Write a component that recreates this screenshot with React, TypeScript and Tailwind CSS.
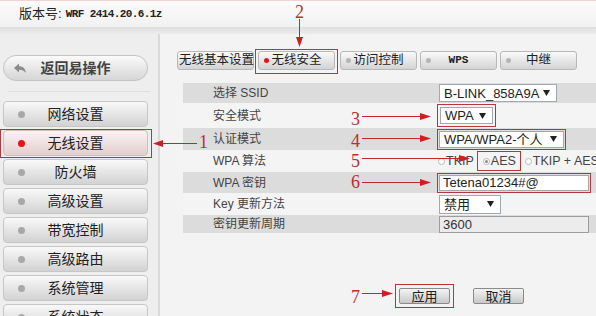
import React from 'react';

const menuItems = ['网络设置', '无线设置', '防火墙', '高级设置', '带宽控制', '高级路由', '系统管理', '系统状态'];
const tabs = ['无线基本设置', '无线安全', '访问控制', 'WPS', '中继'];

function Caret() {
  return (
    <svg width="7" height="6" viewBox="0 0 7 6" className="shrink-0">
      <path d="M0 0 H7 L3.5 6 Z" fill="#222" />
    </svg>
  );
}

function Select({ value, width, height = 'h-[17px]' }: { value: string; width: string; height?: string }) {
  return (
    <div className={`${width} ${height} flex items-center justify-between border border-[#a3a9b0] bg-white pl-[4px] pr-[6px] text-[13px] text-[#222]`}>
      <span className="leading-none">{value}</span>
      <Caret />
    </div>
  );
}

function Radio({ checked, label }: { checked?: boolean; label: string }) {
  return (
    <div className="flex items-center gap-[1px] text-[12.5px] text-[#444]">
      <span className="w-[7px] h-[7px] rounded-full border border-[#b8b8b8] bg-white flex items-center justify-center">
        {checked && <span className="w-[3px] h-[3px] rounded-full bg-[#8a8a8a]" />}
      </span>
      <span className="leading-none whitespace-nowrap">{label}</span>
    </div>
  );
}

function Sidebar() {
  return (
    <div className="w-[158px] shrink-0 bg-[#eeeeee] pt-[21px]">
      <div className="ml-[3px] w-[145px] h-[26px] rounded-full border border-[#c3c3c3] bg-linear-to-b from-[#fbfbfb] to-[#d5d5d5] flex items-center">
        <svg width="12" height="10" viewBox="0 0 12 10" className="ml-[10px]">
          <path d="M5 0.5 L0 5 L5 9.5 V6.8 C8 6.8 10 7.8 12 10 C11.5 6 9 3.3 5 3.3 Z" fill="#8c8c8c" />
        </svg>
        <span className="flex-1 text-center text-[14px] font-bold text-[#444] pr-[22px]">返回易操作</span>
      </div>
      <div className="mt-[10px] mx-[8px] h-px bg-[#dedede]" />
      <div className="mt-[8px] flex flex-col">
        {menuItems.map((item) => {
          const active = item === '无线设置';
          return (
            <div
              key={item}
              className={
                active
                  ? 'w-[152px] h-[29px] border border-[#b3373c] pl-[2px] pt-0'
                  : 'w-[152px] h-[29px] pl-[3px] pt-[1px]'
              }
            >
              <div
                className={
                  active
                    ? 'w-[145px] h-[26px] rounded-[4px] border border-[#d2bcbc] bg-linear-to-b from-[#fbf2f2] to-[#e2cfcf] flex items-center'
                    : 'w-[145px] h-[26px] rounded-[4px] border border-[#c6c6c6] bg-linear-to-b from-[#f9f9f9] to-[#d2d2d2] flex items-center'
                }
              >
                <span className={active ? 'ml-[14px] w-[7px] h-[7px] rounded-full bg-[#e3131b]' : 'ml-[14px] w-[7px] h-[7px] rounded-full bg-[#a8a8a8]'} />
                <span className="flex-1 text-center text-[14px] text-[#222]">{item}</span>
                <span className="w-[21px]" />
              </div>
            </div>
          );
        })}
      </div>
    </div>
  );
}

function Tab({ label, active, first }: { label: string; active?: boolean; first?: boolean }) {
  return (
    <div className="w-[77px] h-[19px] rounded-[3px] border border-[#b8b8b8] bg-linear-to-b from-[#fafafa] to-[#d3d3d3] flex items-center overflow-visible">
      {first ? (
        <span className="ml-[1px] text-[12.5px] text-[#222] whitespace-nowrap leading-none">{label}</span>
      ) : (
        <>
          <span className={active ? 'ml-[5px] w-[5px] h-[5px] rounded-full bg-[#e3131b]' : 'ml-[5px] w-[5px] h-[5px] rounded-full bg-[#b5b5b5]'} />
          <span
            className={
              label === 'WPS'
                ? "flex-1 text-center text-[11px] font-bold text-[#222] font-['Liberation_Mono',monospace]"
                : 'flex-1 text-center text-[12.5px] text-[#222] leading-none'
            }
          >
            {label}
          </span>
          <span className="w-[10px]" />
        </>
      )}
    </div>
  );
}

function Row({ label, gray, h, children }: { label: string; gray?: boolean; h: string; children?: React.ReactNode }) {
  return (
    <div className={`${h} flex items-center ${gray ? 'bg-[#dcdcdc]' : 'bg-[#f4f4f4]'}`}>
      <div className="w-[255px] shrink-0 pl-[30px] text-[12px] text-[#444]">{label}</div>
      <div className="flex-1 min-w-0 flex items-center">{children}</div>
    </div>
  );
}

function Content() {
  return (
    <div className="flex-1 bg-[#f3f3f3] pt-[15px]">
      <div className="ml-[17px] flex items-start">
        <div className="mt-[2px]">
          <Tab label={tabs[0]} first />
        </div>
        <div className="ml-px border border-[#b3373c] px-[2px] pt-px pb-[3px]">
          <Tab label={tabs[1]} active />
        </div>
        <div className="mt-[2px] ml-[2px] flex gap-[3px]">
          {tabs.slice(2).map((t) => (
            <Tab key={t} label={t} />
          ))}
        </div>
      </div>

      <div className="ml-[23px] mt-[9px] w-[413px]">
        <Row label="选择 SSID" gray h="h-[20px]">
          <div className="ml-px">
            <Select value="B-LINK_858A9A" width="w-[118px]" height="h-[18px]" />
          </div>
        </Row>
        <Row label="安全模式" h="h-[25px]">
          <div className="-ml-px border border-[#b3373c] p-[2px]">
            <Select value="WPA" width="w-[53px]" />
          </div>
        </Row>
        <Row label="认证模式" gray h="h-[22px]">
          <div className="-ml-px border border-[#b3373c] p-px">
            <Select value="WPA/WPA2-个人" width="w-[125px]" />
          </div>
        </Row>
        <Row label="WPA 算法" h="h-[22px]">
          <div className="flex items-center shrink-0">
            <Radio label="TKIP" />
            <div className="ml-[3px] h-[20px] border border-[#b3373c] pl-[5px] pr-[4px] flex items-center">
              <Radio checked label="AES" />
            </div>
            <div className="ml-[4px]">
              <Radio label="TKIP + AES" />
            </div>
          </div>
        </Row>
        <Row label="WPA 密钥" gray h="h-[21px]">
          <div className="-ml-px border border-[#b3373c] p-px">
            <div className="w-[150px] h-[16px] border border-[#a6a6a6] bg-white pl-[3px] text-[13px] leading-[14px] text-[#222]">
              Tetena01234#@
            </div>
          </div>
        </Row>
        <Row label="Key 更新方法" h="h-[22px]">
          <div className="ml-px">
            <Select value="禁用" width="w-[62px]" height="h-[19px]" />
          </div>
        </Row>
        <Row label="密钥更新周期" gray h="h-[18px]">
          <div className="ml-px self-end w-[150px] h-[17px] border border-[#9c9c9c] bg-[#ececec] pl-[3px] text-[13px] leading-[15px] text-[#333]">
            3600
          </div>
        </Row>
      </div>

      <div className="mt-[51px] ml-[235px] flex items-center">
        <div className="border border-[#b3373c] p-[3px]">
          <div className="w-[51px] h-[16px] rounded-[2px] border border-[#8a8a8a] bg-linear-to-b from-[#f4f4f4] to-[#c9c9c9] flex items-center justify-center text-[13px] text-[#222] leading-none">
            应用
          </div>
        </div>
        <div className="ml-[19px] w-[51px] h-[16px] rounded-[2px] border border-[#8a8a8a] bg-linear-to-b from-[#f4f4f4] to-[#c9c9c9] flex items-center justify-center text-[13px] text-[#222] leading-none">
          取消
        </div>
      </div>
    </div>
  );
}

function Annotations() {
  const red = '#c0282d';
  const numbers: [string, number, number][] = [
    ['1', 199, 148],
    ['2', 295, 18],
    ['3', 351, 125],
    ['4', 351, 147],
    ['5', 351, 167],
    ['6', 351, 188],
    ['7', 351, 303],
  ];
  return (
    <svg className="absolute inset-0 pointer-events-none" width="596" height="316" viewBox="0 0 596 316">
      <g stroke={red} strokeWidth="1">
        <line x1="160" y1="143.5" x2="197" y2="143.5" />
        <line x1="299.5" y1="19" x2="299.5" y2="40" />
        <line x1="362" y1="116.5" x2="422" y2="116.5" />
        <line x1="362" y1="138.5" x2="422" y2="138.5" />
        <line x1="362" y1="158.5" x2="462" y2="158.5" />
        <line x1="362" y1="182.5" x2="422" y2="182.5" />
        <line x1="362" y1="293.5" x2="384" y2="293.5" />
      </g>
      <g fill="#d01c22">
        <polygon points="153,143.5 163,140 163,147" />
        <polygon points="299.5,47 296,37 303,37" />
        <polygon points="431,116.5 420,113 420,120" />
        <polygon points="431,138.5 420,135 420,142" />
        <polygon points="470,158.5 459,155 459,162" />
        <polygon points="431,182.5 420,179 420,186" />
        <polygon points="393,293.5 382,290 382,297" />
      </g>
      {numbers.map(([n, x, y]) => (
        <text key={n} x={x} y={y} fill="#b8312f" fontSize="18" fontFamily="'Liberation Serif', serif">
          {n}
        </text>
      ))}
    </svg>
  );
}

export default function App() {
  return (
    <div className="relative w-[596px] h-[316px] overflow-hidden bg-[#f3f3f3] font-['Liberation_Sans','Noto_Sans_CJK_SC',sans-serif]">
      <div className="h-[27px] border-t border-[#efd3d3] bg-linear-to-b from-[#fcfcfc] to-[#f1f1f1] flex items-center pl-[19px] text-[#222]">
        <span className="text-[13px]">版本号:</span>
        <span className="ml-[4px] text-[11px] tracking-[-0.6px] font-bold font-['Liberation_Mono',monospace]">WRF 2414.20.6.1z</span>
      </div>
      <div className="h-[7px] bg-linear-to-b from-[#dedede] to-[#ececec]" />
      <div className="flex h-[282px]">
        <Sidebar />
        <div className="w-[2px] bg-[#d9d9d9]" />
        <Content />
      </div>
      <Annotations />
    </div>
  );
}
